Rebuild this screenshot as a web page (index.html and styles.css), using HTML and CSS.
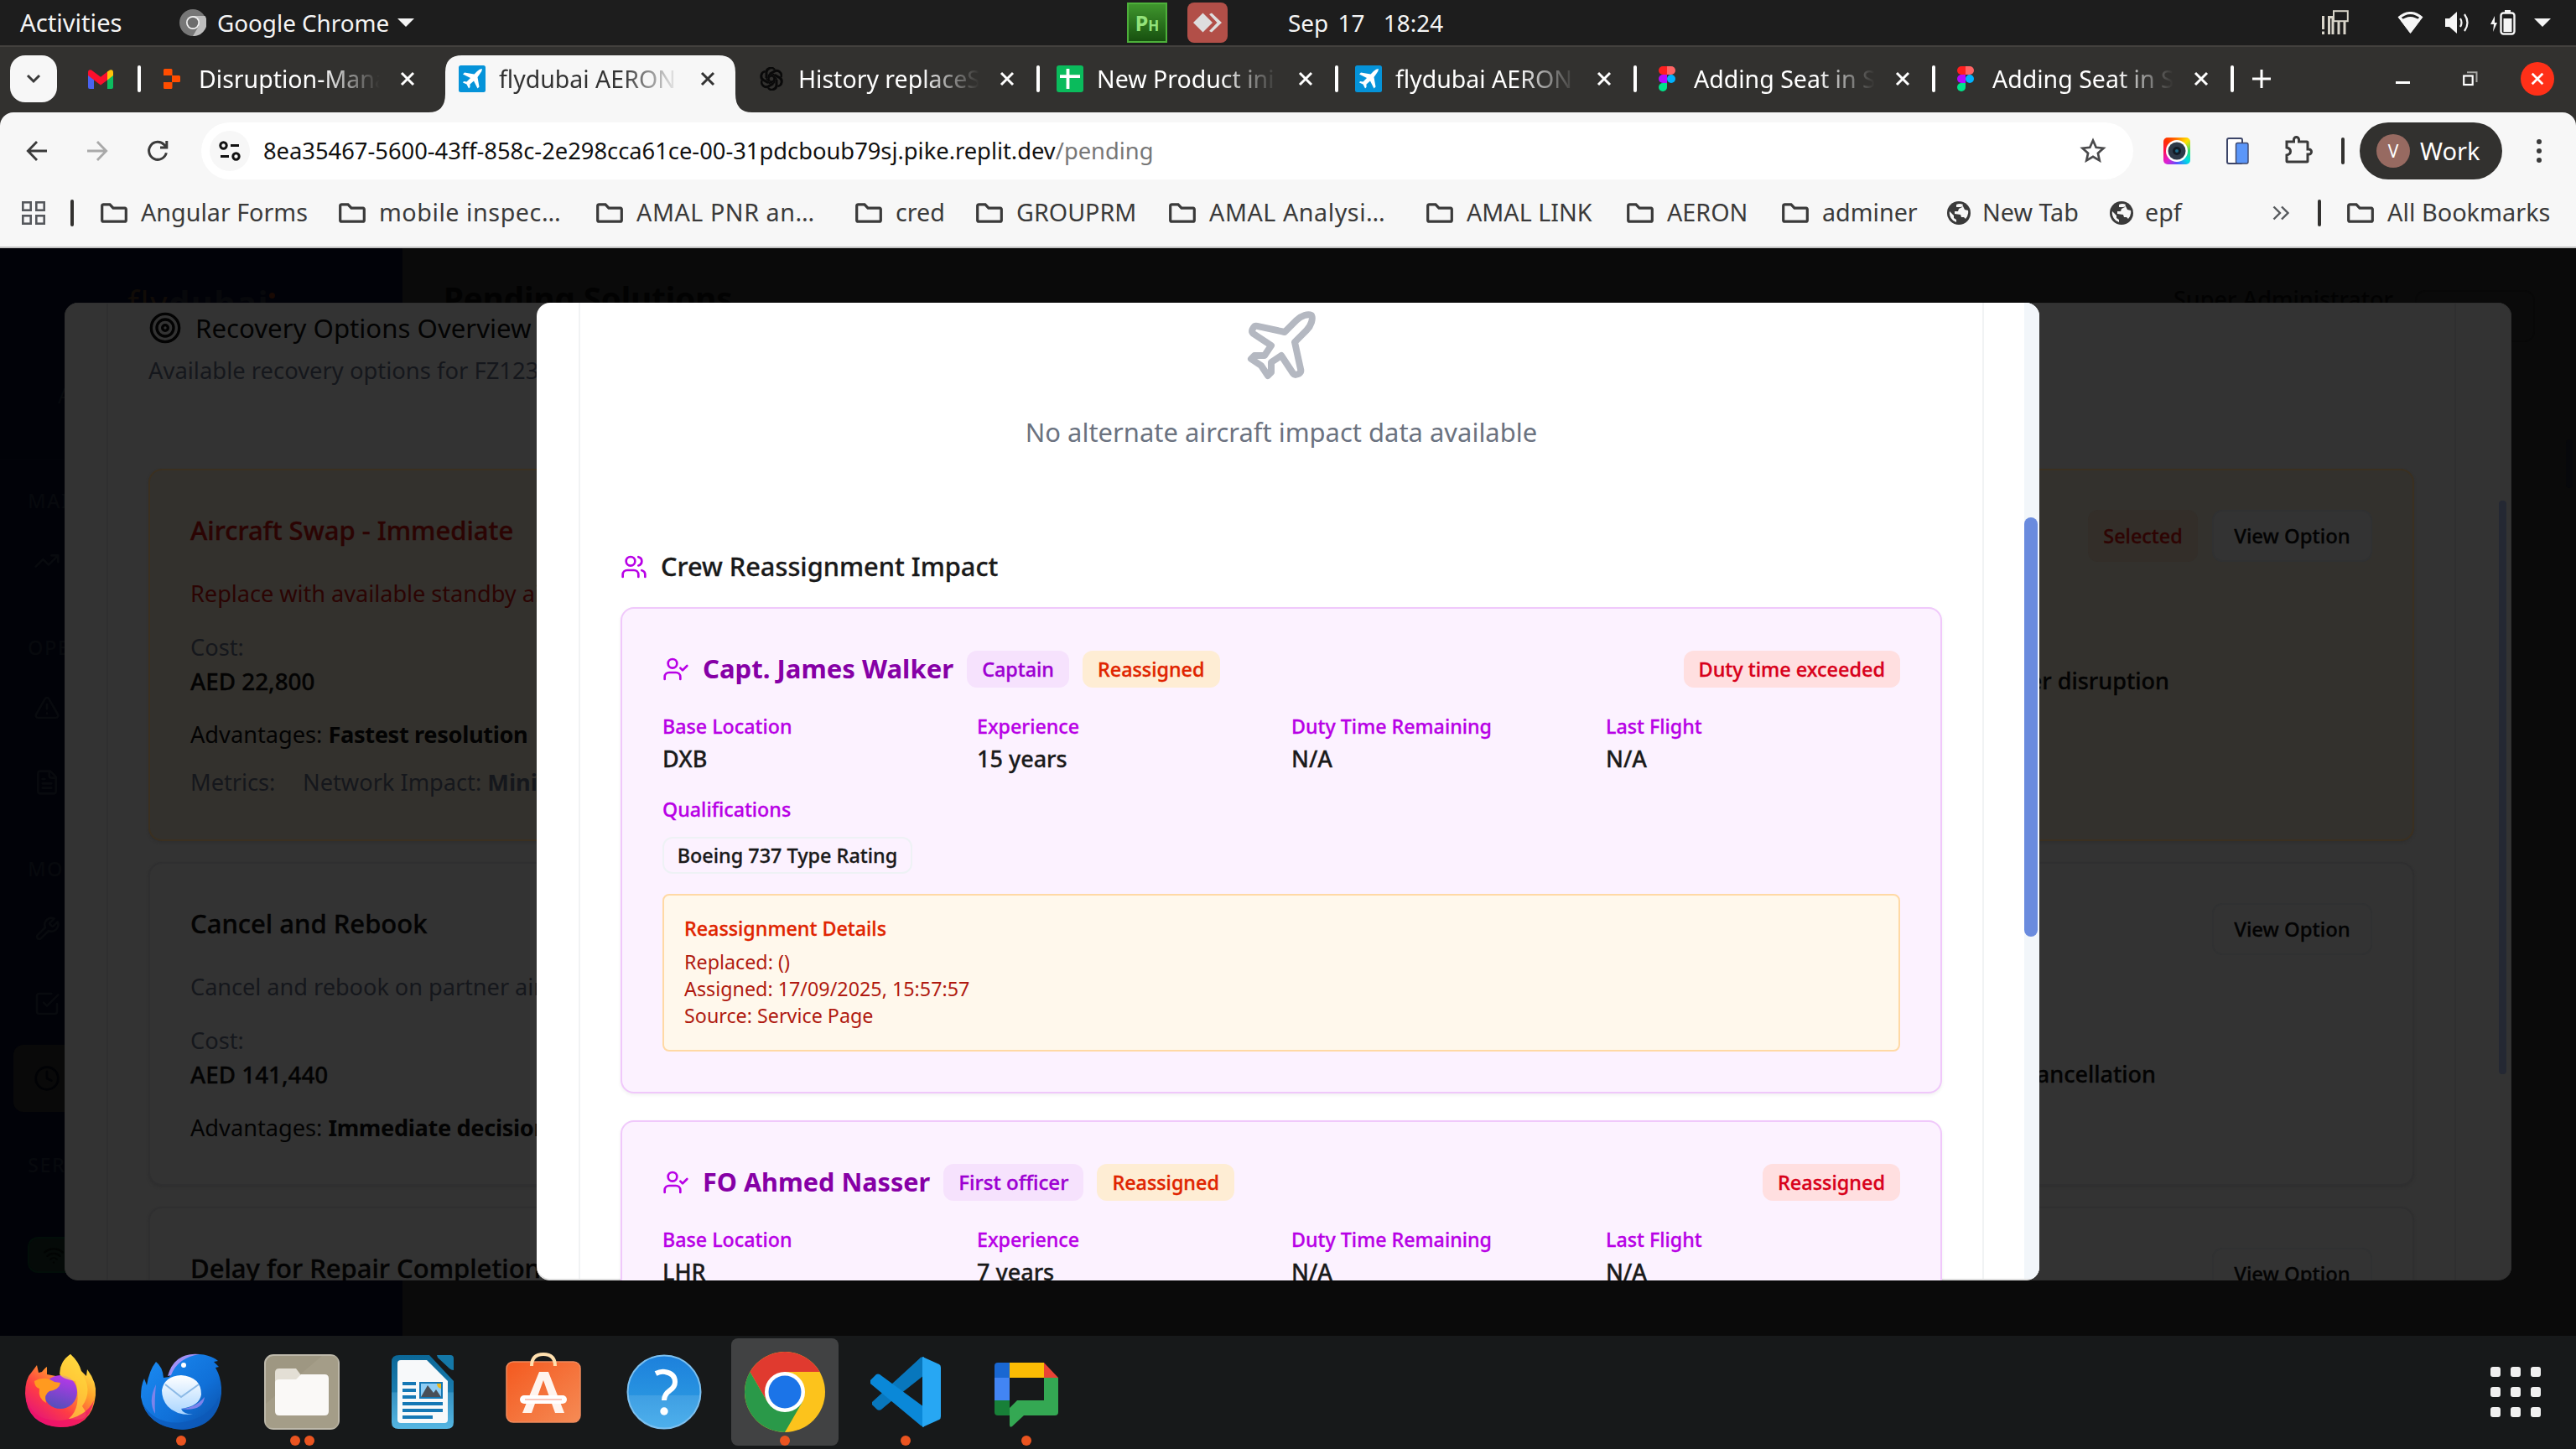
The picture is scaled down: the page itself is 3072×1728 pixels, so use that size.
FILE: index.html
```html
<!DOCTYPE html>
<html lang="en">
<head>
<meta charset="utf-8">
<title>flydubai AERON</title>
<link rel="stylesheet" href="styles.css">
</head>
<body>
<svg class="defs" aria-hidden="true">
  <symbol id="folder" viewBox="0 0 32 24"><path d="M3.500 1.800H11l4 4.400h14a1.300 1.300 0 0 1 1.300 1.300v13.400a1.300 1.300 0 0 1-1.300 1.300H3a1.300 1.300 0 0 1-1.300-1.300V3.500A1.700 1.700 0 0 1 3.500 1.800z" fill="none" stroke="#3a3a3a" stroke-width="3.200"/></symbol>
  <symbol id="globe" viewBox="0 0 28 28"><circle cx="14" cy="14" r="14" fill="#3a3a3a"/><path d="M3 12l5 5v3l3 2v3A11.500 11.500 0 0 1 3 12zM11 7V4q4-2 8 0l-1 3-4 2-1 3H9v3l7 1 1 3h3l2 2q4-5 3-10l-4-1-2-4-3 1z" fill="#f7f7f7"/></symbol>
  <symbol id="close" viewBox="0 0 20 20"><path d="M3 3l14 14M17 3L3 17" stroke="currentColor" stroke-width="3" fill="none"/></symbol>
  <symbol id="fly" viewBox="0 0 32 32"><rect width="32" height="32" rx="2.500" fill="#0593d9"/><path d="M28 4q-3 0-6 3l-3.500 3.500L7 8.500 5 10.500l9 4.500-4.500 4.500-3.500-.5-1 1.500 4.500 2 2.500 5 1.500-1.500v-3.500l4.500-4 4.500 9 2-2-2-11.500L25 10.500q3-3 3-6.500z" fill="#fff"/></symbol>
  <symbol id="figma" viewBox="0 0 20 30"><path d="M10 0H5a5 5 0 0 0 0 10h5z" fill="#ff1f1f"/><path d="M10 0h5a5 5 0 0 1 0 10h-5z" fill="#ff6464"/><path d="M10 10H5a5 5 0 0 0 0 10h5z" fill="#b30aff"/><circle cx="15" cy="15" r="5" fill="#00b2ff"/><path d="M10 20H5a5 5 0 1 0 5 5z" fill="#00e38a"/></symbol>
  <symbol id="usercheck" viewBox="0 0 24 24"><path d="M16 21v-2a4 4 0 0 0-4-4H6a4 4 0 0 0-4 4v2"/><circle cx="9" cy="7" r="4"/><path d="m16 11 2 2 4-4"/></symbol>
  <symbol id="petal" viewBox="-14 -14 28 28"><path d="M-5.500-3.200V-8.500A5 5 0 0 1 3.500-11.400M-5.500-3.200 0 0l6.500-3.800" /></symbol>
</svg>
<div class="desktop">

  <header class="topbar">
    <span class="tb-activities">Activities</span>
    <span class="tb-app">
      <svg width="32" height="32" viewBox="0 0 32 32"><circle cx="16" cy="16" r="16" fill="#777"/><path d="M16 8h14.500A16 16 0 0 1 16 32l7-12z" fill="#bdbdbd"/><circle cx="16" cy="16" r="8" fill="#f2f2f2"/><circle cx="16" cy="16" r="6.300" fill="#6d6d6d"/></svg>
      Google Chrome
      <i class="tri"></i>
    </span>
    <span class="tb-ph">P<small>H</small></span>
    <svg class="tb-desk" width="48" height="48" viewBox="0 0 48 48"><rect width="48" height="48" rx="8" fill="#b24f48"/><path d="M18.500 12.500 30 24 18.500 35.500 7 24z" fill="#dedede"/><path d="M26 14l3-1.500L41 24 29 35.500 26 34l9.500-10z" fill="#dedede"/></svg>
    <span class="tb-clock">Sep 17&nbsp; 18:24</span>
    <span class="tb-status">
      <svg class="st-net" width="32" height="30" viewBox="0 0 32 30" fill="none" stroke="#d8d4c9"><path d="M1.500 7v16M1.500 25.500V29" stroke-width="3"/><path d="M8.500 29V8.500h5M13 29V10M20 29V14M27 29V14" stroke-width="3"/><rect x="14" y="1.200" width="16.800" height="12" stroke-width="2" fill="#1d1d1d"/></svg>
      <svg class="st-wifi" width="31" height="26" viewBox="0 0 31 26"><path d="M15.500 26 4 10.500q11.500-9 23 0z" fill="#f5f5f5"/><path d="M1.500 7.500Q15.500-4.500 29.500 7.500" stroke="#f5f5f5" stroke-width="3" fill="none"/><path d="M15.500 26 1.500 7.500 4 6l4 4z" fill="#f5f5f5"/><path d="M15.500 26 29.500 7.500 27 6l-4 4z" fill="#f5f5f5"/></svg>
      <svg class="st-vol" width="30" height="26" viewBox="0 0 30 26"><path d="M0 8h5l9-8v26l-9-8H0z" fill="#f5f5f5"/><path d="M18 8q3 5 0 10M23 3q7 10 0 20" stroke="#f5f5f5" stroke-width="2.200" fill="none"/></svg>
      <svg class="st-bat" width="30" height="30" viewBox="0 0 30 30"><path d="M5 7 0 17h4l-1 9 5-11H5z" fill="#f5f5f5"/><rect x="12.500" y="3.500" width="16" height="25" rx="3" fill="none" stroke="#f5f5f5" stroke-width="2.400"/><rect x="17" y="0" width="7" height="4" fill="#f5f5f5"/><rect x="15.500" y="10" width="10" height="16" fill="#f5f5f5"/></svg>
      <i class="tri"></i>
    </span>
  </header>

  <nav class="tabs">
    <span class="tabsearch"><svg width="20" height="14" viewBox="0 0 20 14"><path d="M3 3l7 7 7-7" fill="none" stroke="#3a3a3a" stroke-width="3"/></svg></span>
    <svg class="gmail" width="30" height="23" viewBox="0 0 30 23"><path d="M0 3.500V21a2 2 0 0 0 2 2h5V9z" fill="#4a63f0"/><path d="M30 3.500V21a2 2 0 0 1-2 2h-5V9z" fill="#0dbc5f"/><path d="M23 2.500 26 .4q4-1 4 3.100V7l-7 5.500z" fill="#ffc20a"/><path d="M0 7V3.500Q0-.6 4 .4l11 8.400 8-6.300V12.500L15 18.500z" fill="#fb0f2d"/></svg>
    <i class="tabsep"></i>
    <div class="tab">
      <span class="fav"><svg width="20" height="24" viewBox="0 0 20 24"><path d="M0 1.500Q0 0 1.500 0H9q1.500 0 1.500 1.500V8H0zM10 8h8.500Q20 8 20 9.500v5q0 1.500-1.500 1.500H10zM0 16h10.500v6.500Q10.500 24 9 24H1.500Q0 24 0 22.500z" fill="#ff4d00"/></svg></span>
      <span class="tt">Disruption-Manager</span><svg class="x"><use href="#close"/></svg>
    </div>
    <div class="tab active">
      <svg class="tabshape" width="386" height="68" viewBox="0 0 386 68"><path d="M0 68Q20 68 20 46V20Q20 0 40 0H346Q366 0 366 20V46Q366 68 386 68Z" fill="#f7f7f7"/></svg>
      <span class="fav"><svg width="32" height="32"><use href="#fly"/></svg></span>
      <span class="tt">flydubai AERON</span><svg class="x"><use href="#close"/></svg>
    </div>
    <div class="tab">
      <span class="fav"><svg width="28" height="28" viewBox="-14 -14 28 28" fill="none" stroke="#0a0a0a" stroke-width="2"><path id="pt" d="M-6.500-1V-7.500A5.700 5.700 0 0 1 3.800-11M-3.200 3.200V-4.500L4-8.700A5.600 5.600 0 0 1 11.500-2"/><use href="#pt" transform="rotate(60)"/><use href="#pt" transform="rotate(120)"/><use href="#pt" transform="rotate(180)"/><use href="#pt" transform="rotate(240)"/><use href="#pt" transform="rotate(300)"/></svg></span>
      <span class="tt">History replaceState</span><svg class="x"><use href="#close"/></svg><i class="tabsep"></i>
    </div>
    <div class="tab">
      <span class="fav"><svg width="32" height="32" viewBox="0 0 32 32"><rect width="32" height="32" rx="3" fill="#0abb5c"/><path d="M4 13.200h24M13.500 4v24" stroke="#fff" stroke-width="3.800"/></svg></span>
      <span class="tt">New Product ini</span><svg class="x"><use href="#close"/></svg><i class="tabsep"></i>
    </div>
    <div class="tab">
      <span class="fav"><svg width="32" height="32"><use href="#fly"/></svg></span>
      <span class="tt">flydubai AERON</span><svg class="x"><use href="#close"/></svg><i class="tabsep"></i>
    </div>
    <div class="tab">
      <span class="fav"><svg width="20" height="30"><use href="#figma"/></svg></span>
      <span class="tt">Adding Seat in Sea</span><svg class="x"><use href="#close"/></svg><i class="tabsep"></i>
    </div>
    <div class="tab">
      <span class="fav"><svg width="20" height="30"><use href="#figma"/></svg></span>
      <span class="tt">Adding Seat in Sea</span><svg class="x"><use href="#close"/></svg><i class="tabsep"></i>
    </div>
    <svg class="plus" width="22" height="22" viewBox="0 0 22 22"><path d="M11 0v22M0 11h22" stroke="#fff" stroke-width="3"/></svg>
    <span class="winctl">
      <i class="min"></i>
      <svg class="restore" width="18" height="18" viewBox="0 0 18 18" fill="none"><path d="M5 1.200h11.500V13" stroke="#a5a5a3" stroke-width="2"/><rect x="1.200" y="5.500" width="10.500" height="10.500" stroke="#fff" stroke-width="2.200"/></svg>
      <b class="winclose"><svg width="18" height="18" viewBox="0 0 20 20"><use href="#close"/></svg></b>
    </span>
  </nav>

  <div class="chromebars">
    <div class="toolbar">
      <svg class="back" width="36" height="36" viewBox="0 0 24 24"><path d="M20 12H5.500M12 4.700 4.900 12 12 19.300" fill="none" stroke="#3a3a3a" stroke-width="1.900"/></svg>
      <svg class="fwd" width="36" height="36" viewBox="0 0 24 24"><path d="M4 12h14.500M12 4.700 19.100 12 12 19.300" fill="none" stroke="#a9a9a9" stroke-width="1.900"/></svg>
      <svg class="reload" width="36" height="36" viewBox="0 0 24 24"><path d="M18.900 13.500A7 7 0 1 1 17.300 7.200L19 9M19.200 4v5.300H14" fill="none" stroke="#3a3a3a" stroke-width="2"/></svg>
      <div class="omni">
        <span class="site"><svg width="26" height="24" viewBox="0 0 26 24" fill="none" stroke="#111" stroke-width="3"><circle cx="5.500" cy="5.500" r="3.700"/><path d="M14 5.500h10M2 18.500h10"/><circle cx="20.500" cy="18.500" r="3.700"/></svg></span>
        <span class="url">8ea35467-5600-43ff-858c-2e298cca61ce-00-31pdcboub79sj.pike.replit.dev<em>/pending</em></span>
        <svg class="star" width="32" height="30" viewBox="0 0 32 30"><path d="M16 3.500l3.700 8.300 8.800.9-6.600 6 1.900 8.700-7.800-4.500-7.800 4.500 1.900-8.700-6.600-6 8.800-.9z" fill="none" stroke="#4a4a4c" stroke-width="2.700"/></svg>
      </div>
      <span class="cam"><svg width="32" height="32" viewBox="0 0 32 32"><circle cx="16" cy="16" r="13" fill="#fff"/><circle cx="16" cy="16" r="10.500" fill="#2d3a49"/><circle cx="16" cy="16" r="5" fill="#111b26"/><circle cx="16" cy="16" r="2" fill="#1e6a8a"/></svg></span>
      <svg class="phone" width="27" height="32" viewBox="0 0 27 32"><rect x="1" y="1" width="18" height="30" rx="2" fill="#fff" stroke="#3c4568" stroke-width="2"/><rect x="11.500" y="6.500" width="14.500" height="24.500" rx="2" fill="#5b96f8" stroke="#3c4568" stroke-width="1.400"/></svg>
      <svg class="puzzle" width="34" height="34" viewBox="0 0 34 34"><path d="M3 8h8.500V5.500a3 3 0 0 1 6 0V8H27q1 0 1 1v8h1.500a3 3 0 0 1 0 6H28v8q0 1-1 1H4q-1 0-1-1v-7q4.500-1 4.500-4.500T3 15z" fill="none" stroke="#3a3a3a" stroke-width="3"/></svg>
      <i class="barsep"></i>
      <span class="profile"><b>V</b>Work</span>
      <span class="kebab"><i></i><i></i><i></i></span>
    </div>
    <div class="bookmarks">
      <svg class="appsgrid" width="28" height="28" viewBox="0 0 28 28" fill="none" stroke="#55585c" stroke-width="2.600"><rect x="1.300" y="1.300" width="9.400" height="9.400"/><rect x="17.300" y="1.300" width="9.400" height="9.400"/><rect x="1.300" y="17.300" width="9.400" height="9.400"/><rect x="17.300" y="17.300" width="9.400" height="9.400"/></svg>
      <i class="barsep"></i>
      <div class="bms">
        <span class="bm w284"><svg><use href="#folder"/></svg><span>Angular Forms</span></span>
        <span class="bm w307 cut"><svg><use href="#folder"/></svg><span>mobile inspec…</span></span>
        <span class="bm w309 cut"><svg><use href="#folder"/></svg><span>AMAL PNR an…</span></span>
        <span class="bm w144"><svg><use href="#folder"/></svg><span>cred</span></span>
        <span class="bm w230"><svg><use href="#folder"/></svg><span>GROUPRM</span></span>
        <span class="bm w307 cut"><svg><use href="#folder"/></svg><span>AMAL Analysi…</span></span>
        <span class="bm w239"><svg><use href="#folder"/></svg><span>AMAL LINK</span></span>
        <span class="bm w185"><svg><use href="#folder"/></svg><span>AERON</span></span>
        <span class="bm w197"><svg><use href="#folder"/></svg><span>adminer</span></span>
        <span class="bm web w194"><svg><use href="#globe"/></svg><span>New Tab</span></span>
        <span class="bm web w194"><svg><use href="#globe"/></svg><span>epf</span></span>
      </div>
      <svg class="more" width="20" height="18" viewBox="0 0 20 18"><path d="M1.500 1.500 9 9l-7.500 7.500M11 1.500 18.500 9 11 16.500" fill="none" stroke="#55585c" stroke-width="2.400"/></svg>
      <i class="barsep"></i>
      <span class="bm all"><svg><use href="#folder"/></svg><span>All Bookmarks</span></span>
    </div>
  </div>

  <main class="page">
    <aside class="side">
      <div class="logo"><span>fly</span><b>dubai</b><i></i></div>
      <div class="brand">AERON</div>
      <div class="group">
        <div class="glabel">MAIN</div>
        <div class="item"><svg viewBox="0 0 24 24"><path d="M22 7 13.500 15.500 8.500 10.500 2 17M16 7h6v6"/></svg></div>
      </div>
      <div class="group">
        <div class="glabel">OPERATIONS</div>
        <div class="item"><svg viewBox="0 0 24 24"><path d="m21.730 18-8-14a2 2 0 0 0-3.480 0l-8 14A2 2 0 0 0 4 21h16a2 2 0 0 0 1.730-3M12 9v4M12 17h.01"/></svg></div>
        <div class="item"><svg viewBox="0 0 24 24"><path d="M15 2H6a2 2 0 0 0-2 2v16a2 2 0 0 0 2 2h12a2 2 0 0 0 2-2V7zM14 2v4a2 2 0 0 0 2 2h4M10 9H8M16 13H8M16 17H8"/></svg></div>
      </div>
      <div class="group">
        <div class="glabel">MONITORING</div>
        <div class="item"><svg viewBox="0 0 24 24"><path d="M14.700 6.300a1 1 0 0 0 0 1.400l1.600 1.600a1 1 0 0 0 1.400 0l3.770-3.770a6 6 0 0 1-7.940 7.940l-6.910 6.910a2.120 2.120 0 0 1-3-3l6.910-6.910a6 6 0 0 1 7.940-7.940l-3.760 3.760z"/></svg></div>
        <div class="item"><svg viewBox="0 0 24 24"><path d="m9 11 3 3L22 4M21 12v7a2 2 0 0 1-2 2H5a2 2 0 0 1-2-2V5a2 2 0 0 1 2-2h11"/></svg></div>
        <div class="item on"><svg viewBox="0 0 24 24"><circle cx="12" cy="12" r="10"/><path d="M12 6v6l4 2"/></svg></div>
      </div>
      <div class="group">
        <div class="glabel">SERVICES</div>
        <div class="online"><svg viewBox="0 0 24 24"><path d="M12 20h.01M2 8.820a15 15 0 0 1 20 0M5 12.860a10 10 0 0 1 14 0M8.500 16.430a5 5 0 0 1 7 0"/></svg></div>
      </div>
    </aside>
    <section class="content">
      <h1>Pending Solutions</h1>
      <span class="admin">Super Administrator</span>
      <span class="logout"></span>
      <i class="pagescroll"></i>
    </section>

    <div class="modal outer">
      <div class="overview">
        <div class="ov-title"><svg viewBox="0 0 24 24"><circle cx="12" cy="12" r="10"/><circle cx="12" cy="12" r="6"/><circle cx="12" cy="12" r="2"/></svg>Recovery Options Overview</div>
        <div class="ov-sub">Available recovery options for FZ123</div>
        <article class="opt chosen">
          <div class="opt-head"><h3>Aircraft Swap - Immediate</h3><span class="sel">Selected</span><span class="view">View Option</span></div>
          <p class="desc">Replace with available standby aircraft</p>
          <div class="cost"><div>Cost:<strong>AED 22,800</strong></div><strong class="impact">er disruption</strong></div>
          <p class="adv">Advantages: <b>Fastest resolution</b></p>
          <p class="met"><span>Metrics:</span>Network Impact: <b>Minimal</b></p>
        </article>
        <article class="opt">
          <div class="opt-head"><h3>Cancel and Rebook</h3><span class="view">View Option</span></div>
          <p class="desc">Cancel and rebook on partner airlines</p>
          <div class="cost two"><div>Cost:<strong>AED 141,440</strong></div><strong class="impact">ancellation</strong></div>
          <p class="adv">Advantages: <b>Immediate decision</b></p>
        </article>
        <article class="opt">
          <div class="opt-head"><h3>Delay for Repair Completion</h3><span class="view">View Option</span></div>
        </article>
      </div>
      <i class="outer-thumb"></i>
    </div>

    <div class="modal inner">
      <div class="details">
        <svg class="plane" viewBox="0 0 24 24"><path d="M17.800 19.200 16 11l3.500-3.500C21 6 21.500 4 21 3c-1-.5-3 0-4.500 1.500L13 8 4.800 6.200c-.5-.1-.9.1-1.100.5l-.3.5c-.2.5-.1 1 .3 1.300L9 12l-2 3H4l-1 1 3 2 2 3 1-1v-3l3-2 3.500 5.300c.3.4.8.5 1.300.3l.5-.2c.4-.3.6-.7.5-1.200z"/></svg>
        <p class="none">No alternate aircraft impact data available</p>
        <h2><svg class="ic" viewBox="0 0 24 24"><path d="M16 21v-2a4 4 0 0 0-4-4H6a4 4 0 0 0-4 4v2"/><circle cx="9" cy="7" r="4"/><path d="M22 21v-2a4 4 0 0 0-3-3.870M16 3.130a4 4 0 0 1 0 7.750"/></svg><span>Crew Reassignment Impact</span></h2>
        <article class="crew">
          <div class="crew-head"><svg class="ic"><use href="#usercheck"/></svg><h4>Capt. James Walker</h4><span class="badge role">Captain</span><span class="badge re">Reassigned</span><span class="badge alert">Duty time exceeded</span></div>
          <dl>
            <div><dt>Base Location</dt><dd>DXB</dd></div>
            <div><dt>Experience</dt><dd>15 years</dd></div>
            <div><dt>Duty Time Remaining</dt><dd>N/A</dd></div>
            <div><dt>Last Flight</dt><dd>N/A</dd></div>
          </dl>
          <div class="qual">Qualifications</div>
          <span class="rating">Boeing 737 Type Rating</span>
          <div class="note"><b>Reassignment Details</b><p>Replaced: ()</p><p>Assigned: 17/09/2025, 15:57:57</p><p>Source: Service Page</p></div>
        </article>
        <article class="crew">
          <div class="crew-head"><svg class="ic"><use href="#usercheck"/></svg><h4 class="fo">FO Ahmed Nasser</h4><span class="badge role fo">First officer</span><span class="badge re">Reassigned</span><span class="badge alert">Reassigned</span></div>
          <dl>
            <div><dt>Base Location</dt><dd>LHR</dd></div>
            <div><dt>Experience</dt><dd>7 years</dd></div>
            <div><dt>Duty Time Remaining</dt><dd>N/A</dd></div>
            <div><dt>Last Flight</dt><dd>N/A</dd></div>
          </dl>
        </article>
      </div>
      <div class="track"><i></i></div>
    </div>
  </main>

  <footer class="dock">
    <div class="app"><svg width="96" height="96" viewBox="0 0 96 96">
      <defs><linearGradient id="ff" x1="1" y1="0" x2=".25" y2="1"><stop offset=".1" stop-color="#fff04d"/><stop offset=".4" stop-color="#ffa52a"/><stop offset=".7" stop-color="#ff3d44"/><stop offset="1" stop-color="#e3127c"/></linearGradient><linearGradient id="fp" x1=".6" y1="0" x2=".3" y2="1"><stop offset="0" stop-color="#b837ea"/><stop offset="1" stop-color="#5150b8"/></linearGradient></defs>
      <path d="M60 3q10 9 13 20l6 6 1-8q12 16 10 31-4 38-42 38Q8 88 6 50 6 32 14 24l6-8 2 9 4-1q4-5 6-6v9l16 3Q46 12 60 3z" fill="url(#ff)"/>
      <circle cx="48" cy="48" r="20" fill="url(#fp)"/>
      <path d="M60 3q10 9 12 20 16 22 2 42Q88 84 58 80q16-14 8-45Q48 32 47 26 47 12 60 3z" fill="#ffd43c" opacity=".75"/>
      <path d="M17 35q12-7 24 1l7 1q-1 8-13 10-7 4-4 14-10-5-8-17-6-2-6-9z" fill="#ff9a1f"/>
      <path d="M6 50q6 34 43 32 30-4 39-24-6 32-40 32Q10 88 6 50z" fill="#ee1168" opacity=".75"/>
    </svg></div>
    <div class="app"><svg width="96" height="96" viewBox="0 0 96 96">
      <defs><linearGradient id="tb" x1="0" y1="0" x2="1" y2="1"><stop offset="0" stop-color="#1b8df5"/><stop offset=".6" stop-color="#1070d8"/><stop offset="1" stop-color="#0b4ba0"/></linearGradient><linearGradient id="tm" x1="0" y1="0" x2="0" y2="1"><stop offset="0" stop-color="#fff"/><stop offset="1" stop-color="#a9d5ff"/></linearGradient></defs>
      <path d="M34 30Q44 2 70 3q14 1 22 8l-5 1 6 6-4 1q8 14 7 31-4 40-46 43Q6 90 0 54q0-14 4-22l3 8Q10 22 18 12q8 6 9 19z" fill="url(#tb)"/>
      <path d="M32 29Q40 0 70 3q-26 4-34 25z" fill="#a091f5"/>
      <path d="M18 39q-10 20-1 35-1-16 1-35zM46 68q18 0 30-14-2 18-30 14z" fill="#7e83ea"/>
      <circle cx="51" cy="16" r="3" fill="#fff"/>
      <path d="M48 28q24 2 24 23-2 14-24 17 2 6 14 7-20 1-30-10Q25 57 25 46q3-17 23-18z" fill="url(#tm)"/>
      <path d="M29 39l19 15 21-15" fill="none" stroke="#8bb9e6" stroke-width="2"/>
      <path d="M2 62q16 26 48 22 32-5 43-30-4 36-43 39Q12 91 2 62z" fill="#0d58b8" opacity=".7"/>
    </svg><span class="dots"><i></i></span></div>
    <div class="app"><svg width="96" height="96" viewBox="0 0 96 96"><rect x="4" y="4" width="88" height="88" rx="10" fill="#9e9782" stroke="#bdb8aa" stroke-width="2"/><path d="M72 5h15q4 0 4 5v76q0 5-5 5H10q-4 0-5-4V62z" fill="#a79f8a" opacity=".7"/><path d="M16 44V25q0-5 5-5h20l6 8v8z" fill="#e3dfd5"/><path d="M16 37q0-4 5-4h20l6-6h28q5 0 5 5v39q0 5-5 5H21q-5 0-5-5z" fill="#faf9f7"/></svg><span class="dots"><i></i><i></i></span></div>
    <div class="app"><svg width="96" height="96" viewBox="0 0 96 96"><defs><linearGradient id="lw" x1="0" y1="0" x2="0" y2="1"><stop offset="0" stop-color="#0b6797"/><stop offset=".5" stop-color="#1a7db0"/><stop offset=".51" stop-color="#3592c2"/><stop offset="1" stop-color="#55b6e2"/></linearGradient></defs><path d="M20 4h36l29 31v49q0 8-8 8H19q-8 0-8-8V12q0-8 9-8z" fill="url(#lw)"/><path d="M65 4h16q4 0 4 4v14q-3 0-5-2L66 7z" fill="#1478a8"/><path d="M22 10h31l25 25v46q0 4-4 4H22q-4 0-4-4V14q0-4 4-4z" fill="#f7f9fa"/><path d="M24 38h16M24 46h16M24 54h16M24 62h48M24 70h48M24 78h36" stroke="#1578b5" stroke-width="4"/><rect x="44" y="36" width="28" height="20" fill="#1578b5"/><rect x="46" y="38" width="24" height="16" fill="#8ecdf4"/><path d="M46 54l8-14 7 9 3-4 6 9z" fill="#494f57"/><path d="M65 38h5v6q-5-1-5-6z" fill="#f0b818"/></svg></div>
    <div class="app"><svg width="96" height="96" viewBox="0 0 96 96"><defs><linearGradient id="sw" x1="0" y1="0" x2="1" y2="1"><stop offset="0" stop-color="#f4591f"/><stop offset="1" stop-color="#f58b55"/></linearGradient></defs><rect x="4" y="12" width="88" height="72" rx="8" fill="url(#sw)" stroke="#f08a5c" stroke-width="1.500"/><path d="M34 17Q34 3 48 3t14 14" fill="none" stroke="#ffdfae" stroke-width="4"/><path d="M43 24h11l19 49H62L48 34 34 73H23z" fill="#fff4ee"/><rect x="20" y="52" width="56" height="10" rx="5" fill="#fff"/><path d="M26 57h44" stroke="#f9c8bd" stroke-width="2"/></svg></div>
    <div class="app"><svg width="96" height="96" viewBox="0 0 96 96"><defs><linearGradient id="hp" x1="0" y1="0" x2="0" y2="1"><stop offset="0" stop-color="#1c80dc"/><stop offset=".54" stop-color="#2893e0"/><stop offset=".55" stop-color="#3f9fe3"/><stop offset="1" stop-color="#4eb0ec"/></linearGradient></defs><circle cx="48" cy="48" r="43.500" fill="url(#hp)" stroke="#7cc0f0" stroke-width="2"/><path d="M38 26q6-3 11-2 12 2 12 12 0 6-6 10-7 5-7 12" fill="none" stroke="#fff" stroke-width="6"/><circle cx="48" cy="71" r="4.700" fill="#fff"/></svg></div>
    <div class="app current"><svg width="96" height="96" viewBox="0 0 96 96"><circle cx="48" cy="48" r="48" fill="#fcc31c"/><path d="M48 24h41.570A48 48 0 0 0 6.430 24L27.200 60z" fill="#e03a2f"/><path d="M6.430 24A48 48 0 0 0 48 96l20.800-36L48 48l-20.800 12z" fill="#2a9949"/><circle cx="48" cy="48" r="24" fill="#fff"/><circle cx="48" cy="48" r="19.500" fill="#1b74e8"/></svg><span class="dots"><i></i></span></div>
    <div class="app"><svg width="96" height="96" viewBox="0 0 96 96"><path d="M8 63l7 6q2 1 4 0L69 26 67 6z" fill="#0569b0"/><path d="M8 63v-3L66 7l4-1v22L18 69q-2 1-4 0z" fill="#0877bd"/><path d="M6 38v-4l7-7q2-1 4 0L70 66v24l-4-2z" fill="#0a88d8"/><path d="M68 6l20 9q2 1 2 4v58q0 3-2 4l-20 9z" fill="#27a7f3"/></svg><span class="dots"><i></i></span></div>
    <div class="app"><svg width="96" height="96" viewBox="0 0 96 96"><path d="M10 31V17q0-4 4-4h14v18z" fill="#1967d2"/><path d="M10 31h18v27H10z" fill="#4285f4"/><path d="M28 13h41v18H28z" fill="#fbbc04"/><path d="M69 13l17 18H69z" fill="#ea4335"/><path d="M10 58h18v18H14q-4 0-4-4z" fill="#188038"/><path d="M69 31h17v41q0 4-4 4H45L31 89q-3 2-3-2V67l9-9h32z" fill="#34a853"/></svg><span class="dots"><i></i></span></div>
    <div class="launcher"><i></i><i></i><i></i><i></i><i></i><i></i><i></i><i></i><i></i></div>
  </footer>
</div>
</body>
</html>
```
FILE: styles.css
```css
* { box-sizing: border-box; }
body { margin: 0; background: #0a0a0a; font-family: "Noto Sans", "Open Sans", sans-serif; }
h1, h2, h3, h4, p, dl, dd { margin: 0; font: inherit; }
svg { display: block; flex: none; }
i, em { font-style: normal; }
.defs { position: absolute; width: 0; height: 0; }
.desktop { width: 3072px; height: 1728px; display: flex; flex-direction: column; overflow: hidden; white-space: nowrap; background: #32312f; }

/* system bar */
.topbar { height: 56px; flex: none; display: flex; align-items: center; background: #1d1d1d; border-bottom: 2px solid #43413e; color: #f4f4f4; font-size: 29.200px; }
.tb-activities { width: 190px; padding-left: 24px; }
.tb-app { width: 1154px; padding-left: 24px; display: flex; align-items: center; gap: 13px; font-size: 27.800px; }
.tri { border: 10px solid transparent; border-top-color: #f4f4f4; border-bottom: 0; margin-left: -3px; }
.tb-ph { width: 48px; height: 48px; display: flex; align-items: center; justify-content: center; background: linear-gradient(#3f962d, #17500f); border: 2px solid #4db03a; color: #93e27b; font-size: 25px; font-weight: 700; }
.tb-ph small { font-size: 17px; padding-top: 7px; }
.tb-desk { margin-left: 24px; }
.tb-clock { margin-left: 72px; font-size: 27.900px; word-spacing: 4px; }
.tb-status { margin-left: auto; margin-right: 30px; display: flex; align-items: center; }
.st-wifi { margin-left: 58px; }
.st-vol { margin-left: 26px; }
.st-bat { margin-left: 24px; }
.tb-status .tri { margin-left: 22px; }

/* tab strip */
.tabs { height: 78px; flex: none; display: flex; align-items: center; padding: 0 0 2px 12px; background: #32312f; color: #fff; font-size: 28.500px; }
.tabsearch { width: 56px; height: 56px; border-radius: 18px; background: #f7f7f7; display: flex; align-items: center; justify-content: center; }
.gmail { margin: 0 29px 0 37px; }
.tabsep { width: 4px; height: 32px; border-radius: 2px; background: #fff; }
.tabs > .tabsep { margin-right: 1px; }
.tab { width: 358px; height: 76px; display: flex; align-items: center; padding-left: 20px; position: relative; color: #fff; }
.tab ~ .tab ~ .tab { width: 356px; }
.tab:nth-of-type(3) { margin-left: -1px; }
.fav { width: 32px; display: flex; justify-content: center; position: relative; }
.tt { width: 216px; margin-left: 16px; padding-bottom: 1px; overflow: hidden; position: relative; -webkit-mask-image: linear-gradient(90deg, #000 68%, transparent 100%); mask-image: linear-gradient(90deg, #000 68%, transparent 100%); }
.tab .x { width: 20px; height: 20px; margin-left: 23px; position: relative; }
.tab > .tabsep { margin-left: auto; }
.active { color: #333; }
.tabshape { position: absolute; left: -16px; top: 10px; }
.plus { margin-left: 22px; }
.winctl { margin-left: auto; padding-right: 26px; display: flex; align-items: center; }
.min { width: 17px; height: 3px; background: #fff; margin-top: 9px; }
.restore { margin-left: 63px; }
.winclose { width: 40px; height: 40px; border-radius: 50%; background: #ff3018; margin-left: 51px; display: flex; align-items: center; justify-content: center; }

/* toolbar and bookmarks */
.chromebars { height: 162px; flex: none; background: #f7f7f7; border-bottom: 2px solid #c3c3c3; border-radius: 16px 16px 0 0; }
.toolbar { height: 92px; display: flex; align-items: center; }
.back { margin-left: 26px; }
.fwd, .reload { margin-left: 36px; }
.omni { width: 2304px; height: 68px; margin-left: 34px; border-radius: 34px; background: #fff; display: flex; align-items: center; padding-left: 10px; }
.site { width: 48px; height: 48px; border-radius: 50%; background: #f7f7f7; display: flex; align-items: center; justify-content: center; }
.url { margin: -2px 0 0 16px; font-size: 27.320px; color: #111; }
.url em { color: #777; }
.star { margin: -2px 32px 0 auto; }
.cam { margin-left: 36px; width: 32px; height: 32px; border-radius: 5px; background: conic-gradient(#ff7a00, #ffe000, #30e070, #00d8e8, #5a50ff, #e020d0, #ff1050, #ff3000, #ff7a00); }
.phone { margin-left: 43px; }
.puzzle { margin-left: 42px; margin-top: -4px; }
.barsep { width: 4px; height: 32px; border-radius: 2px; background: #32312f; }
.toolbar .barsep { margin-left: 34px; }
.profile { width: 170px; height: 68px; margin-left: 18px; border-radius: 34px; background: #32312f; color: #fff; display: flex; align-items: center; gap: 12px; padding: 0 0 1px 20px; font-size: 29px; }
.profile b { width: 40px; height: 40px; border-radius: 50%; background: #976a61; font-weight: 400; font-size: 21px; display: flex; align-items: center; justify-content: center; }
.kebab { margin-left: 41px; display: flex; flex-direction: column; gap: 5px; }
.kebab i { width: 6px; height: 6px; border-radius: 50%; background: #3a3a3a; }
.bookmarks { height: 56px; display: flex; align-items: center; padding-left: 26px; font-size: 28.700px; color: #3a3a3a; }
.bookmarks > .barsep { margin-left: 30px; }
.bms { width: 2590px; margin-left: 32px; display: flex; }
.bm { height: 40px; display: flex; align-items: center; gap: 16px; }
.bm span { margin-top: -3px; }
.bm svg { width: 32px; height: 24px; }
.cut { letter-spacing: .55px; }
.web { gap: 14px; }
.web svg { width: 28px; height: 28px; }
.w284 { width: 284px; } .w307 { width: 307px; } .w309 { width: 309px; } .w144 { width: 144px; } .w230 { width: 230px; }
.w239 { width: 239px; } .w185 { width: 185px; } .w197 { width: 197px; } .w194 { width: 194px; }
.bookmarks > .more { margin-right: 4px; }
.all { margin-left: 31px; font-size: 28.900px; }

/* application behind the dialogs */
.page { height: 1297px; flex: none; position: relative; display: flex; background: #0a0a0a; }
.side { width: 480px; background: #010208; color: #07090d; overflow: hidden; }
.logo { padding: 38px 0 0 152px; height: 130px; display: flex; align-items: flex-start; font-size: 40px; line-height: 54px; color: #100b07; letter-spacing: 1.500px; }
.logo b { color: #07080b; }
.logo i { width: 7px; height: 7px; border-radius: 50%; background: #180903; margin-top: 15px; }
.brand { height: 123px; padding: 27px 0 0 69px; font-size: 26px; border-bottom: 2px solid #020309; }
.group { display: flex; flex-direction: column; gap: 8px; }
.brand + .group { margin-top: 16px; }
.group + .group { margin-top: 31px; }
.glabel { height: 64px; margin-bottom: -8px; padding-left: 33px; display: flex; align-items: center; font-size: 23.500px; font-weight: 500; letter-spacing: 1.500px; }
.item { height: 80px; margin: 0 16px; padding-left: 24px; display: flex; align-items: center; border-radius: 12px; }
.item + .item { margin-top: 1px; }
.side svg { width: 32px; height: 32px; fill: none; stroke: #080a0e; stroke-width: 2; stroke-linecap: round; stroke-linejoin: round; }
.on { background: #090909; }
.side .on svg { stroke: #010205; }
.online { margin: 54px 33px 0; height: 43px; border-radius: 12px; border: 2px solid #020e09; background: #050a08; padding-left: 16px; display: flex; align-items: center; }
.side .online svg { width: 26px; height: 26px; stroke: #020403; }
.content { flex: 1; height: 400px; display: flex; align-items: flex-start; padding-left: 49px; color: #020202; }
.content h1 { width: 2063px; padding-top: 33px; font-size: 38.400px; font-weight: 700; line-height: 52px; }
.admin { padding-top: 43px; font-size: 27px; font-weight: 500; line-height: 36px; width: 288px; }
.logout { width: 143px; height: 62px; margin-top: 50px; border: 2px solid #080808; border-radius: 12px; }
.pagescroll { width: 8px; height: 58px; margin: 228px 0 0 37px; border-radius: 4px; background: #07080b; }

/* dialogs */
.modal { position: absolute; top: 65px; height: 1166px; border-radius: 16px; overflow: hidden; }
.outer { left: 77px; width: 2918px; background: #333; box-shadow: inset 0 0 0 1px #303030; color: #030303; }
.overview { width: 2802px; height: 1166px; margin-left: 50px; padding: 0 48px; border: solid #2f2f30; border-width: 0 2px; }
.ov-title { height: 60px; padding-bottom: 1px; display: flex; align-items: center; gap: 16px; font-size: 31.200px; }
.ov-title svg { width: 40px; height: 40px; fill: none; stroke: #030303; stroke-width: 2; }
.ov-sub { margin-top: 1px; height: 137px; font-size: 27.400px; line-height: 40px; color: #15171c; }
.opt { height: 386px; margin-bottom: 25px; padding: 47px 48px; border: 2px solid #2f2f30; border-radius: 16px; box-shadow: 0 2px 3px #2f2f2f; font-size: 27.200px; line-height: 40px; }
.chosen { height: 444px; background: #33312d; border-color: #3b3020; }
.opt-head { height: 62px; display: flex; align-items: flex-start; }
.opt h3 { margin-right: auto; font-size: 31px; font-weight: 500; line-height: 48px; -webkit-text-stroke: .35px; }
.chosen h3, .chosen .desc { color: #2b0403; }
.sel, .view { height: 62px; border-radius: 12px; display: flex; align-items: center; justify-content: center; font-size: 23.900px; font-weight: 500; -webkit-text-stroke: .3px; }
.sel { width: 131px; margin-right: 17px; background: #332e29; color: #2e0403; font-size: 23.400px; }
.view { width: 191px; border: 2px solid #303132; background: #333; }
.desc { margin-top: 18px; color: #15171c; letter-spacing: -.05px; }
.cost { margin-top: 24px; display: flex; justify-content: space-between; align-items: flex-end; padding-right: 242px; color: #15171c; }
.cost.two { padding-right: 258px; }
.cost strong { display: block; font-weight: 500; color: #030303; font-size: 27.800px; -webkit-text-stroke: .3px; }
.cost .impact { font-size: 27px; }
.adv { margin-top: 24px; }
.adv b { letter-spacing: -.35px; }
.met { margin-top: 17px; color: #15171c; }
.met span { display: inline-block; width: 134px; }
.outer-thumb { position: absolute; left: 2903px; top: 236px; width: 9px; height: 684px; border-radius: 4px; background: #242833; }

.inner { left: 640px; width: 1792px; background: #fff; box-shadow: inset 0 -2px 0 #dedede; display: flex; }
.details { width: 1676px; height: 1164px; margin-left: 50px; padding: 3px 48px 0; border: solid #f1f3f4; border-width: 0 2px; }
.plane { width: 96px; height: 96px; margin: 0 auto; fill: none; stroke: #b4b8c1; stroke-width: 2; stroke-linecap: round; stroke-linejoin: round; }
.none { margin-top: 31px; text-align: center; font-size: 30.950px; line-height: 48px; color: #6b7280; }
.ic { width: 32px; height: 32px; fill: none; stroke: #b800e6; stroke-width: 2; stroke-linecap: round; stroke-linejoin: round; }
.details h2 { height: 48px; margin-top: 113px; display: flex; align-items: center; gap: 16px; font-size: 30.750px; font-weight: 500; color: #1a1a1a; -webkit-text-stroke: .3px; }
h2 span, h4 { padding-bottom: 2px; }
.crew { height: 580px; margin-bottom: 32px; padding: 48px; border: 2px solid #f0c8fb; border-radius: 16px; background: #fcf2ff; box-shadow: 0 2px 4px rgba(0, 0, 0, .06); }
.details h2 + .crew { margin-top: 24px; }
.crew-head { height: 48px; display: flex; align-items: center; }
.crew-head h4 { margin-left: 16px; font-size: 31.100px; font-weight: 700; color: #8600a6; }
.crew-head h4.fo { font-size: 30.600px; }
.badge { height: 44px; margin-left: 16px; padding: 0 18px 1px; border-radius: 12px; display: flex; align-items: center; font-size: 23.350px; font-weight: 500; -webkit-text-stroke: .35px; }
.role { background: #f6e2fd; color: #9d00d2; }
.role.fo { font-size: 24.150px; }
.re { background: #feedd4; color: #e02400; }
.alert { margin-left: auto; background: #ffdfe0; color: #d8001a; font-size: 23.450px; }
dl { margin-top: 28px; display: grid; grid-template-columns: repeat(4, 1fr); gap: 24px; }
dt, .qual { font-size: 23.250px; font-weight: 500; line-height: 32px; color: #b800e6; -webkit-text-stroke: .3px; }
dd { margin-top: 3px; margin-bottom: 1px; font-size: 27px; font-weight: 500; line-height: 40px; color: #1a1a1a; -webkit-text-stroke: .3px; }
.qual { margin-top: 23px; }
.rating { width: 298px; height: 44px; margin-top: 17px; padding-bottom: 1px; display: flex; align-items: center; justify-content: center; border: 2px solid #eef2f5; border-radius: 12px; font-size: 23.400px; font-weight: 500; color: #1a1a1a; -webkit-text-stroke: .3px; }
.note { height: 188px; margin-top: 24px; padding: 23px 24px; border: 2px solid #ffd9a5; border-radius: 8px; background: #fff8ec; font-size: 23.300px; line-height: 32px; color: #b01a10; }
.note b { display: block; margin-bottom: 8px; font-weight: 500; color: #e02400; -webkit-text-stroke: .3px; }
.track { width: 18px; height: 1164px; margin-left: auto; padding-top: 256px; background: #f2f6fa; }
.track i { display: block; width: 16px; height: 500px; border-radius: 8px; background: #6a8bde; }

/* dock */
.dock { height: 135px; flex: none; display: flex; background: #17191a; }
.app { width: 128px; height: 128px; margin: 3px 8px 0; padding-top: 16px; position: relative; display: flex; justify-content: center; align-items: flex-start; border-radius: 8px; }
.current { background: #414243; }
.dots { position: absolute; left: 0; right: 0; bottom: 0; display: flex; justify-content: center; gap: 5px; }
.dots i { width: 12px; height: 12px; border-radius: 50%; background: #ea5420; }
.launcher { margin: 37px 42px 0 auto; display: grid; grid-template-columns: repeat(3, 12px); grid-auto-rows: 12px; gap: 12px; }
.launcher i { border-radius: 3px; background: #f0f0f0; }
```
